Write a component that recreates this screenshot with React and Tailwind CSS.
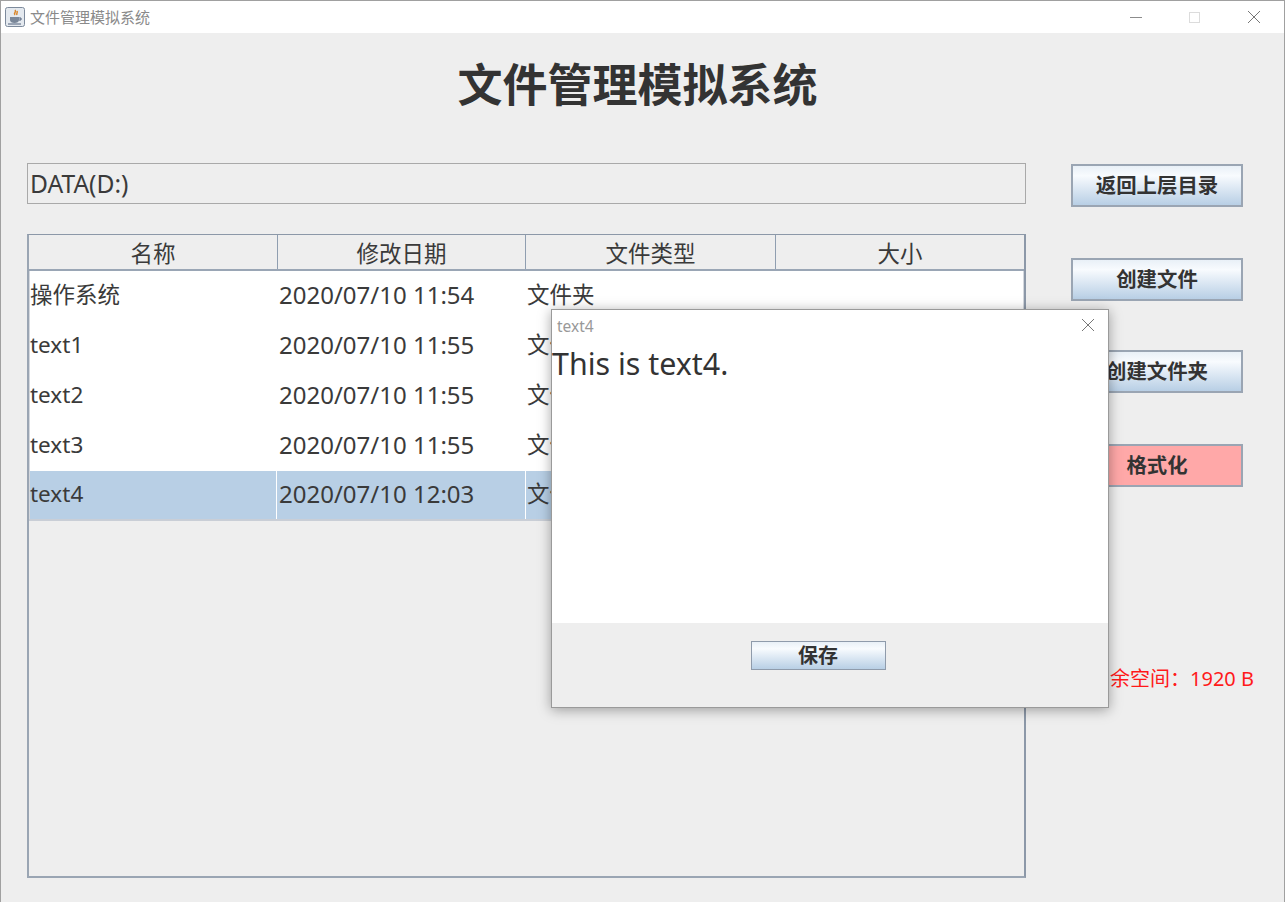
import React from 'react';

const FONT = "font-['Noto_Sans','Noto_Sans_CJK_SC',sans-serif]";

const rows = [
  { name: '操作系统', date: '2020/07/10 11:54', type: '文件夹', size: '' },
  { name: 'text1', date: '2020/07/10 11:55', type: '文件', size: '' },
  { name: 'text2', date: '2020/07/10 11:55', type: '文件', size: '' },
  { name: 'text3', date: '2020/07/10 11:55', type: '文件', size: '' },
  { name: 'text4', date: '2020/07/10 12:03', type: '文件', size: '', selected: true },
];

function JavaIcon() {
  return (
    <svg width="20" height="20" viewBox="0 0 20 20">
      <rect x="0.5" y="0.5" width="19" height="19" rx="2" fill="#e4e9ef" stroke="#7d8a9c" />
      <path d="M10 3c2 2-2 3 0 5M12 4c1 2-1 2 0 4" fill="none" stroke="#d9862a" strokeWidth="1.5" />
      <path d="M5 10h9v3c0 2-2 3-4.500 3S5 15 5 13z" fill="#7a8799" />
      <path d="M14 11h2v2h-2M3 17h13" fill="none" stroke="#4f5f78" />
    </svg>
  );
}

function GradButton({ children, className = '' }) {
  return (
    <div className={`flex items-center justify-center h-[43px] border-2 border-[#9aa5b3] bg-gradient-to-b from-[#e9f0f7] via-[#f8fbfe] via-25% to-[#b8cfe5] text-[20.4px] font-bold text-[#333333] ${className}`}>
      {children}
    </div>
  );
}

export default function App() {
  return (
    <div className={`relative w-[1285px] h-[902px] overflow-hidden bg-[#eeeeee] border-x border-t border-[#a0a0a0] text-[#333333] ${FONT}`}>
      {/* title bar */}
      <div className="flex items-center h-[32px] bg-white pl-[4px]">
        <JavaIcon />
        <span className="ml-[5px] text-[15px] text-[#8a8a8a]">文件管理模拟系统</span>
        <div className="ml-auto flex items-center">
          <svg width="14" height="14" viewBox="0 0 14 14" className="mr-[45px]">
            <path d="M1 7.500h12" stroke="#8c8c8c" />
          </svg>
          <svg width="13" height="13" viewBox="0 0 13 13" className="mr-[46px]">
            <rect x="1.500" y="1.500" width="10" height="10" fill="none" stroke="#dcdcdc" />
          </svg>
          <svg width="14" height="14" viewBox="0 0 14 14" className="mr-[23px]">
            <path d="M1 1l12 12M13 1L1 13" stroke="#777777" />
          </svg>
        </div>
      </div>

      <h1 className="mt-[22px] h-[60px] pr-[10px] text-center text-[45px] leading-[60px] font-bold text-[#333333]">文件管理模拟系统</h1>

      <div className="flex mt-[48px] pl-[26px]">
        {/* left column */}
        <div className="w-[999px]">
          <div className="flex items-center h-[41px] border border-[#a9a9a9] pl-[2px] pt-[2px] text-[24.6px] text-[#3a3a3a]">DATA(D:)</div>

          <div className="mt-[30px] h-[644px] border-2 border-t border-[#8c98a8] border-l-[#9aa5b3] border-b-[#9aa5b3]">
            <div className="flex h-[36px] border-b-[2px] border-[#9aa6b5] text-[22.5px] text-[#3a3a3a]">
              <div className="w-[249px] flex items-center justify-center pt-[3px] border-r border-[#8f9eb0]">名称</div>
              <div className="w-[248px] flex items-center justify-center pt-[3px] border-r border-[#8f9eb0]">修改日期</div>
              <div className="w-[250px] flex items-center justify-center pt-[3px] border-r border-[#8f9eb0]">文件类型</div>
              <div className="flex-1 flex items-center justify-center pt-[3px]">大小</div>
            </div>
            <div className="border-x border-[#d4d8de] bg-white">
              {rows.map((row) => (
                <div key={row.name} className={`flex text-[#3a3a3a] ${row.selected ? 'h-[48px] bg-[#b8cfe5]' : 'h-[50px] bg-white'}`}>
                  <div className={`w-[247px] flex items-center pb-[3px] text-[22.5px] ${row.selected ? 'border-r border-white pb-[1px]' : ''}`}>{row.name}</div>
                  <div className={`w-[249px] flex items-center pl-[2px] pb-[3px] text-[24px] ${row.selected ? 'border-r border-white pb-[1px]' : ''}`}>{row.date}</div>
                  <div className={`flex-1 flex items-center pl-[1px] pb-[3px] text-[22.5px] ${row.selected ? 'pb-[1px]' : ''}`}>{row.type}</div>
                </div>
              ))}
            </div>
            <div className="h-[2px] bg-[#c9ced6]" />
          </div>
        </div>

        {/* right column */}
        <div className="ml-[45px] mt-[1px] w-[172px]">
          <GradButton>返回上层目录</GradButton>
          <GradButton className="mt-[51px]">创建文件</GradButton>
          <GradButton className="mt-[49px]">创建文件夹</GradButton>
          <div className="mt-[51px] flex items-center justify-center h-[43px] border-2 border-[#9aa5b3] bg-[#ffa8a8] text-[20.4px] font-bold text-[#333333]">格式化</div>
          <div className="mt-[177px] text-right -mr-[11px] whitespace-nowrap text-[20px] leading-[30px] text-[#ff1a1a]">剩余空间：1920 B</div>
        </div>
      </div>

      {/* text editor dialog */}
      <div className="absolute left-[550px] top-[308px] w-[558px] h-[399px] flex flex-col border border-[#9a9a9a] bg-white shadow-[0_2px_12px_rgba(0,0,0,0.35)]">
        <div className="flex items-center justify-between h-[30px] pl-[5px] pr-[13px] text-[15.5px] text-[#999999]">
          <span className="pt-[3px]">text4</span>
          <svg width="14" height="14" viewBox="0 0 14 14">
            <path d="M1 1l12 12M13 1L1 13" stroke="#777777" />
          </svg>
        </div>
        <div className="flex-1 text-[30.4px] leading-[48px] text-[#333333]">This is text4.</div>
        <div className="flex justify-center h-[84px] pt-[18px] pr-[24px] bg-[#eeeeee]">
          <div className="flex items-center justify-center w-[135px] h-[29px] border border-[#8f9bab] bg-gradient-to-b from-[#e9f0f7] via-[#f8fbfe] via-25% to-[#b8cfe5] text-[20px] font-bold">保存</div>
        </div>
      </div>
    </div>
  );
}
